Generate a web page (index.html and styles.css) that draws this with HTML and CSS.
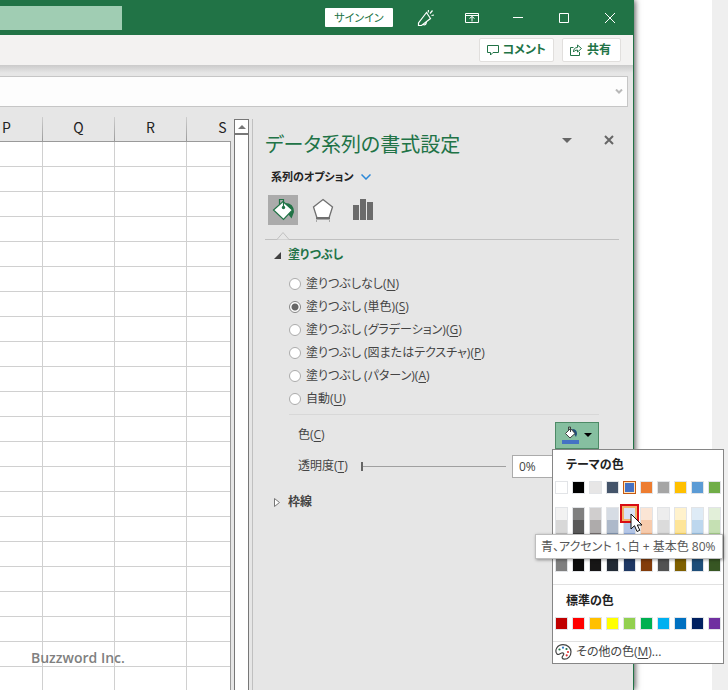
FILE: index.html
```html
<!DOCTYPE html>
<html lang="ja">
<head>
<meta charset="utf-8">
<title>データ系列の書式設定</title>
<link rel="stylesheet" href="styles.css">
</head>
<body>
<div class="window">
  <header class="titlebar">
    <div class="search"></div>
    <button class="signin">サインイン</button>
    <div class="captions">
      <button aria-label="新機能"><svg width="18" height="18" viewBox="0 0 18 18"><path d="M9.500 3.500 1.500 14v2.500h3L13.500 9.500zM6 15.500q3 1.500 3.500-2.800M11.200 3.500l.3-2.500M13 4.500l2.500-3M14.500 6.500l2.500-.5" stroke-width="1.200"/></svg></button>
      <button aria-label="リボンの表示"><svg width="14" height="12" viewBox="0 0 14 12"><path d="M.5 1.500h13v9H.5zM.5 3.500h13M7 9.500v-5M4.500 6.500 7 4.500l2.500 2"/></svg></button>
      <button aria-label="最小化"><svg width="10" height="10" viewBox="0 0 10 10"><path d="M0 4.500h10"/></svg></button>
      <button aria-label="最大化"><svg width="10" height="10" viewBox="0 0 10 10"><path d="M.5.5h9v9h-9z"/></svg></button>
      <button aria-label="閉じる"><svg width="10" height="10" viewBox="0 0 10 10"><path d="m0 0 10 10M10 0 0 10"/></svg></button>
    </div>
  </header>
  <div class="ribbon">
    <button class="action"><svg width="12" height="12" viewBox="0 0 12 12"><path d="M.5 1.500h11v7H6l-2.500 2.500V8.500h-3z"/></svg>コメント</button>
    <button class="action"><svg width="13" height="12" viewBox="0 0 13 12"><path d="M3.500 3.500h-3v8h9V8M3.500 8q0-4.500 4-4.500v-2.500l4 3.500-4 3.500V6q-3 0-4 2z"/></svg>共有</button>
  </div>
  <div class="formula">
    <div class="formula-box"><svg width="8" height="5" viewBox="0 0 8 5"><path d="m1 .5 3 3 3-3"/></svg></div>
  </div>
  <main class="work">
    <div class="sheet">
      <table class="grid">
        <thead><tr><th>P</th><th>Q</th><th>R</th><th>S</th></tr></thead>
        <tbody id="rows"></tbody>
      </table>
      <div class="watermark">Buzzword Inc.</div>
    </div>
    <div class="scroll"><button class="scroll-up" aria-label="上へ"></button></div>
    <aside class="pane">
      <div class="pane-head">
        <h1>データ系列の書式設定</h1>
        <button aria-label="作業ウィンドウ オプション"><svg width="10" height="5" viewBox="0 0 10 5"><path class="solid" d="M0 0h10L5 5z"/></svg></button>
        <button aria-label="閉じる"><svg width="10" height="10" viewBox="0 0 10 10"><path class="cross" d="m1 1 8 8M9 1 1 9"/></svg></button>
      </div>
      <button class="series">系列のオプション<svg width="10" height="6" viewBox="0 0 10 6"><path d="m.5.5 4.500 4.500 4.500-4.500"/></svg></button>
      <div class="tabs">
        <button class="tab active" aria-label="塗りつぶしと線"><svg width="26" height="24" viewBox="0 0 26 24"><path d="M15 5q9 0 9 9l-2.500 6.500-3-4q1-5-3.500-8z" fill="#217346"/><path d="M13 3.500 22.500 12l-9 9.500L3.500 12z" fill="#fff" stroke="#217346" stroke-width="1.200"/><path d="M9.500 6.500v-5h4V9" fill="none" stroke="#217346" stroke-width="1.200"/><circle cx="13.500" cy="9.500" r="1.700" fill="#217346"/></svg></button>
        <button class="tab" aria-label="効果"><svg width="24" height="26" viewBox="0 0 24 26"><path d="m12 2.500 9.500 7.500-3.500 11H6L2.500 10z" fill="#fff" stroke="#707070" stroke-width="1.300"/><path d="M5 21h14" stroke="#707070" stroke-width="2"/><path d="M5.500 25v-2.500h13V25" fill="none" stroke="#a8a8a8"/></svg></button>
        <button class="tab" aria-label="系列のオプション"><svg width="20" height="22" viewBox="0 0 20 22"><path d="M0 6h6v15H0zM7 0h6v21H7zM14 3h6v18h-6z" fill="#6b6b6b"/></svg></button>
      </div>
      <div class="notch"><svg width="14" height="8" viewBox="0 0 14 8"><path d="M0 7.500h1l6-7 6 7h1" fill="#e6e6e6" stroke="#c0c0c0"/></svg></div>
      <h2 class="section open"><svg width="7" height="7" viewBox="0 0 7 7"><path d="M7 0v7H0z" fill="#404040"/></svg>塗りつぶし</h2>
      <fieldset class="options">
        <label><input type="radio" name="fill"><span>塗りつぶしなし(<u>N</u>)</span></label>
        <label><input type="radio" name="fill" checked><span>塗りつぶし (単色)(<u>S</u>)</span></label>
        <label><input type="radio" name="fill"><span>塗りつぶし (グラデーション)(<u>G</u>)</span></label>
        <label><input type="radio" name="fill"><span>塗りつぶし (図またはテクスチャ)(<u>P</u>)</span></label>
        <label><input type="radio" name="fill"><span>塗りつぶし (パターン)(<u>A</u>)</span></label>
        <label><input type="radio" name="fill"><span>自動(<u>U</u>)</span></label>
      </fieldset>
      <div class="field color-field">
        <span>色(<u>C</u>)</span>
        <div class="picker">
          <button class="color-button" aria-label="塗りつぶしの色"><svg width="18" height="18" viewBox="0 0 18 18"><path d="M0 14h17v4H0z" fill="#4472c4"/><path d="M10 3q5 0 5 5l-1 3-2-3z" fill="#1f4e79"/><path d="M8.500 2.500 13 7.500 8 12 3.500 7.500z" fill="#fff" stroke="#404040"/><path d="M6.500 5V1h2v5" fill="none" stroke="#404040"/></svg><svg width="8" height="4" viewBox="0 0 8 4"><path d="M0 0h8L4 4z"/></svg></button>
          <div class="popup">
            <h3>テーマの色</h3>
            <div class="swatches" id="theme"></div>
            <div class="swatches shades" id="shades"></div>
            <h3 class="standard-title">標準の色</h3>
            <div class="swatches" id="standard"></div>
            <button class="more"><svg width="17" height="16" viewBox="0 0 17 16"><path d="M8 .7c4.500 0 8 3 8 7 0 4.500-3 7.500-6.500 7.500-2.500 0-3-2-1.500-3.500 1.500-1.800.5-3.500-1.500-2.700C4 10 3.500 11.500 2 10-.7 6.500 2 .7 8 .7z" fill="#fff" stroke="#444" stroke-width="1.200"/><circle cx="4.500" cy="5.500" r="1.100" fill="#217346"/><circle cx="8" cy="3.700" r="1.100" fill="#2b78c5"/><circle cx="11.500" cy="5" r="1.100" fill="#217346"/><circle cx="13" cy="8" r="1.100" fill="#e03030"/><circle cx="11.700" cy="11.300" r="1.100" fill="#e03030"/></svg><span>その他の色(<u>M</u>)...</span></button>
            <div class="marker"></div>
            <div class="tooltip" role="tooltip">青、アクセント 1、白 + 基本色 80%</div>
            <svg class="cursor" width="13" height="20" viewBox="0 0 13 20"><path d="M1 1v15l3.500-3.300L7 18.500l2.800-1.200L7.300 12H12z" fill="#fff" stroke="#111"/></svg>
          </div>
        </div>
      </div>
      <div class="field">
        <label for="alpha">透明度(<u>T</u>)</label>
        <input class="slider" id="alpha" type="range" value="0">
        <input class="percent" type="text" value="0%" aria-label="透明度">
      </div>
      <h2 class="section"><svg width="6" height="9" viewBox="0 0 6 9"><path d="m.5.5 5 4-5 4z" fill="#fff" stroke="#777"/></svg>枠線</h2>
    </aside>
  </main>
</div>
<div class="desktop"></div>
<script src="script.js"></script>
</body>
</html>
```
FILE: styles.css
```css
* { box-sizing: border-box; }

body {
  margin: 0;
  display: flex;
  height: 100vh;
  overflow: hidden;
  background: #fff;
  color: #444;
  font: 12px/18px "Open Sans", "Noto Sans CJK JP", sans-serif;
  font-feature-settings: "palt";
}

button, input {
  margin: 0;
  padding: 0;
  border: 0;
  background: none;
  color: inherit;
  font: inherit;
  font-feature-settings: inherit;
}

svg { display: block; flex: none; }
h1, h2, h3 { margin: 0; }
u { text-underline-offset: 2px; }

.window {
  flex: 1;
  display: flex;
  flex-direction: column;
  position: relative;
  z-index: 1;
  min-width: 0;
  background: #e6e6e6;
  border-right: 1px solid #217346;
  box-shadow: 1px 0 6px rgba(0, 0, 0, 0.7);
}

.desktop { width: 94px; border-right: 16px solid #efefef; }

.titlebar {
  display: flex;
  align-items: center;
  height: 35px;
  background: #217346;
}
.search { width: 122px; height: 24px; background: #a0cdb3; }
.signin {
  width: 68px;
  height: 19px;
  margin: 0 10px 0 auto;
  border-radius: 1px;
  background: #fff;
  color: #217346;
  font-size: 11px;
  line-height: 18px;
}
.captions { display: flex; }
.captions button {
  display: flex;
  align-items: center;
  justify-content: center;
  width: 46px;
  height: 34px;
}
.captions svg { fill: none; stroke: #fff; }

.ribbon {
  display: flex;
  justify-content: flex-end;
  align-items: center;
  gap: 8px;
  height: 30px;
  padding-right: 12px;
  background: #f3f2f1;
}
.action {
  display: flex;
  align-items: center;
  gap: 4px;
  height: 24px;
  padding: 0 7px;
  border: 1px solid #e1dfdd;
  border-radius: 2px;
  background: #fff;
  color: #217346;
  font-weight: 700;
  font-size: 12px;
}
.action svg { fill: none; stroke: #217346; }
.action:last-child { padding: 0 9px 0 7px; }

.formula {
  padding: 11px 5px 0 0;
  background: linear-gradient(#cacaca, #e6e6e6 8px);
}
.formula-box {
  display: flex;
  align-items: center;
  justify-content: flex-end;
  height: 31px;
  padding-right: 4px;
  border: 1px solid #c6c6c6;
  border-left: 0;
  background: #fdfdfd;
}
.formula-box svg { fill: none; stroke: #b8b8b8; stroke-width: 2; }

.work { display: flex; flex: 1; min-height: 0; }

.sheet {
  position: relative;
  width: 231px;
  margin-top: 10px;
  overflow: hidden;
}
.grid {
  width: 288px;
  margin-left: -29px;
  border-collapse: separate;
  border-spacing: 0;
  table-layout: fixed;
}
.grid th {
  height: 25px;
  padding: 0;
  border-right: 1px solid;
  border-bottom: 1px solid #999;
  border-image: linear-gradient(#d0d0d0, #999) 1;
  color: #222;
  font: 14px/20px "Noto Sans CJK JP", sans-serif;
  vertical-align: top;
}
.grid td {
  height: 25px;
  padding: 0;
  border-right: 1px solid #d0d0d0;
  border-bottom: 1px solid #d0d0d0;
  background: #fff;
}
.sheet::after {
  content: "";
  position: absolute;
  inset: 24px 0 0 auto;
  border-right: 1px solid #999;
}
.watermark {
  position: absolute;
  left: 31px;
  bottom: 22px;
  color: #808080;
  font-size: 14px;
  font-weight: 600;
  line-height: 20px;
}

.scroll {
  width: 15px;
  margin: 12px 3px 0;
  border: 1px solid #777;
  border-bottom: 0;
  background: #fff;
}
.scroll-up {
  display: flex;
  align-items: center;
  justify-content: center;
  width: 100%;
  height: 15px;
  border-bottom: 2px solid #777;
}
.scroll-up::before {
  content: "";
  border: 4px solid transparent;
  border-top: 0;
  border-bottom-color: #777;
}

.pane {
  flex: 1;
  min-width: 0;
  margin-top: 12px;
  padding: 10px 14px 0 12px;
  border-left: 1px solid #c0c0c0;
}
.pane-head { display: flex; align-items: center; height: 32px; }
.pane-head h1 {
  margin-right: auto;
  color: #217346;
  font-size: 20px;
  font-weight: 400;
  line-height: 32px;
}
.pane-head button {
  display: flex;
  justify-content: center;
  align-items: center;
  width: 20px;
  height: 20px;
  margin: 0 0 10px 22px;
}
.solid { fill: #666; }
.cross { stroke: #666; stroke-width: 2; }

.series {
  display: flex;
  align-items: center;
  gap: 7px;
  height: 32px;
  padding-left: 6px;
  color: #222;
  font-size: 11px;
  font-weight: 700;
}
.series svg { fill: none; stroke: #2b88d8; stroke-width: 1.500; }

.tabs { display: flex; gap: 10px; padding: 2px 3px; }
.tab {
  display: flex;
  align-items: center;
  justify-content: center;
  width: 30px;
  height: 30px;
}
.tab.active { background: #ababab; }

.notch {
  height: 13px;
  padding: 5px 0 0 11px;
  border-bottom: 1px solid #c0c0c0;
}

.section {
  display: flex;
  align-items: center;
  gap: 8px;
  height: 30px;
  padding-left: 9px;
  font-size: 12px;
}
.section.open { color: #217346; gap: 7px; }

.options {
  margin: 0 20px 0 24px;
  padding: 2px 0 4px;
  border: 0;
  border-bottom: 1px solid #d8d8d8;
}
.options label {
  display: flex;
  align-items: center;
  gap: 5px;
  height: 23px;
}
.options input {
  appearance: none;
  width: 12px;
  height: 12px;
  border: 1px solid #ababab;
  border-radius: 50%;
  background: #fff;
}
.options input:checked {
  border-color: #888;
  background: radial-gradient(#666 0 3px, #fff 4px);
}

.field {
  display: flex;
  align-items: center;
  height: 22px;
  margin: 0 20px 10px 33px;
}
.field.color-field {
  justify-content: space-between;
  height: 28px;
  margin-top: 6px;
  margin-bottom: 6px;
}
.slider {
  appearance: none;
  flex: 1;
  min-width: 0;
  height: 10px;
  margin: 0 6px 0 13px;
  background: linear-gradient(#a0a0a0, #a0a0a0) center / 100% 1px no-repeat;
}
.slider::-webkit-slider-thumb {
  appearance: none;
  width: 2px;
  height: 9px;
  background: #666;
}
.percent {
  width: 87px;
  height: 23px;
  padding-left: 6px;
  border: 1px solid #ababab;
  background: #fff;
}

.picker { position: relative; }
.color-button {
  display: flex;
  align-items: center;
  justify-content: center;
  gap: 4px;
  width: 44px;
  height: 27px;
  border: 1px solid #4d8a66;
  background: #86bfa0;
}
.popup {
  position: absolute;
  z-index: 2;
  top: 27px;
  left: -3px;
  width: 172px;
  padding-top: 5px;
  border: 1px solid #868686;
  background: #fff;
}
.popup h3 {
  padding-left: 13px;
  color: #222;
  font-size: 12px;
  line-height: 20px;
}
.popup .standard-title {
  margin-top: 12px;
  padding-top: 6px;
  border-top: 1px solid #e1e1e1;
}
.swatches {
  display: grid;
  grid-template-columns: repeat(10, 13px);
  column-gap: 4px;
  padding: 6px 2px 0;
}
.shades { padding-top: 13px; }
.swatch { height: 13px; border: 1px solid #e2e4e7; }
.shades .swatch { border-width: 0 1px; }
.shades .swatch:nth-child(-n+10) { border-top-width: 1px; }
.shades .swatch:nth-child(n+41) { border-bottom-width: 1px; }
.swatch.selected {
  border-color: #c55a11;
  box-shadow: inset 0 0 0 1px #ffe2bd;
}
.more {
  display: flex;
  align-items: center;
  gap: 4px;
  width: 100%;
  height: 22px;
  margin-top: 11px;
  padding-left: 2px;
  border-top: 1px solid #e1e1e1;
}
.marker {
  position: absolute;
  left: 67px;
  top: 54px;
  width: 19px;
  height: 19px;
  border: 2px solid #d90c14;
  box-shadow: inset 0 0 0 2px #f1b56b;
}
.tooltip {
  position: absolute;
  left: -18px;
  top: 84px;
  height: 25px;
  padding: 0 6px 0 5px;
  border: 1px solid #bebebe;
  background: #fff;
  box-shadow: 1px 1px 3px rgba(0, 0, 0, 0.4);
  color: #575757;
  line-height: 23px;
  white-space: nowrap;
}
.cursor { position: absolute; left: 77px; top: 63px; }
```
FILE: script.js
```js
const theme = ["#ffffff", "#000000", "#e7e6e6", "#44546a", "#4472c4", "#ed7d31", "#a5a5a5", "#ffc000", "#5b9bd5", "#70ad47"];
const shades = [
  "#f2f2f2", "#7f7f7f", "#d0cece", "#d6dce4", "#d9e2f3", "#fbe5d5", "#ededed", "#fff2cc", "#deebf6", "#e2efd9",
  "#d8d8d8", "#595959", "#aeabab", "#adb9ca", "#b4c6e7", "#f7cbac", "#dbdbdb", "#fee599", "#bdd7ee", "#c5e0b3",
  "#bfbfbf", "#3f3f3f", "#757070", "#8496b0", "#8eaadb", "#f4b183", "#c9c9c9", "#ffd965", "#9cc3e5", "#a8d08d",
  "#a5a5a5", "#262626", "#3a3838", "#323f4f", "#2f5496", "#c55a11", "#7b7b7b", "#bf9000", "#2e75b5", "#538135",
  "#7f7f7f", "#0c0c0c", "#171616", "#222a35", "#1f3864", "#833c0b", "#525252", "#7f6000", "#1e4e79", "#375623"
];
const standard = ["#c00000", "#ff0000", "#ffc000", "#ffff00", "#92d050", "#00b050", "#00b0f0", "#0070c0", "#002060", "#7030a0"];

function fill(id, colors, selected) {
  const box = document.getElementById(id);
  colors.forEach((color, index) => {
    const swatch = document.createElement("button");
    swatch.className = index === selected ? "swatch selected" : "swatch";
    swatch.style.backgroundColor = color;
    swatch.setAttribute("aria-label", color);
    box.append(swatch);
  });
}

fill("theme", theme, 4);
fill("shades", shades);
fill("standard", standard);

document.getElementById("rows").innerHTML = "<tr><td></td><td></td><td></td><td></td></tr>".repeat(40);
```
